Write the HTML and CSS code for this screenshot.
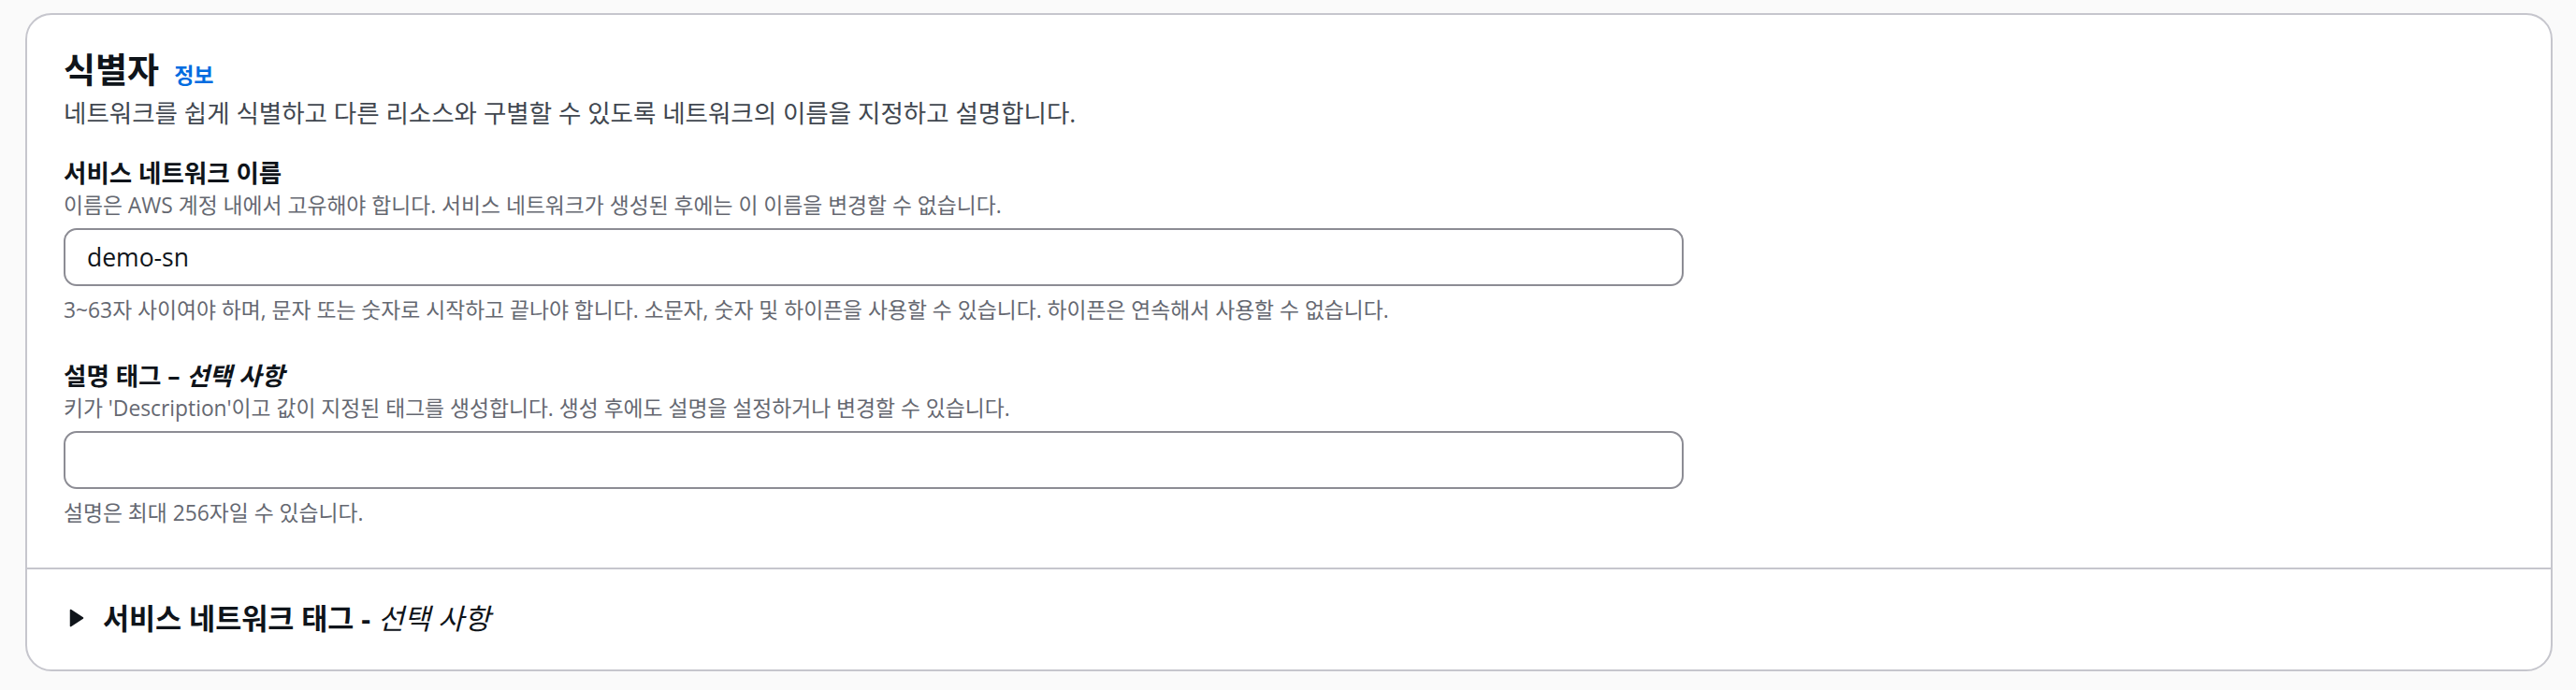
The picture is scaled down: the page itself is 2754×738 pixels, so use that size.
FILE: index.html
```html
<!DOCTYPE html>
<html lang="ko">
<head>
<meta charset="utf-8">
<title>식별자</title>
<link rel="stylesheet" href="styles.css">
</head>
<body>
<div class="container">
  <div class="header">
    <div class="title-row">
      <h2 class="title">식별자</h2>
      <a class="info" href="#">정보</a>
    </div>
    <p class="header-desc">네트워크를 쉽게 식별하고 다른 리소스와 구별할 수 있도록 네트워크의 이름을 지정하고 설명합니다.</p>
  </div>
  <div class="body">
    <div class="field">
      <div class="label">서비스 네트워크 이름</div>
      <div class="desc">이름은 AWS 계정 내에서 고유해야 합니다. 서비스 네트워크가 생성된 후에는 이 이름을 변경할 수 없습니다.</div>
      <input class="input" type="text" value="demo-sn">
      <div class="constraint">3~63자 사이여야 하며, 문자 또는 숫자로 시작하고 끝나야 합니다. 소문자, 숫자 및 하이픈을 사용할 수 있습니다. 하이픈은 연속해서 사용할 수 없습니다.</div>
    </div>
    <div class="field">
      <div class="label">설명 태그 – <i>선택 사항</i></div>
      <div class="desc">키가 'Description'이고 값이 지정된 태그를 생성합니다. 생성 후에도 설명을 설정하거나 변경할 수 있습니다.</div>
      <input class="input" type="text" value="">
      <div class="constraint">설명은 최대 256자일 수 있습니다.</div>
    </div>
  </div>
  <div class="expand">
    <span class="caret"><svg width="16" height="20" viewBox="0 0 16 20"><polygon points="1.5,1.5 14.5,10 1.5,18.5" fill="#0f141a" stroke="#0f141a" stroke-width="1.5" stroke-linejoin="round"/></svg></span>
    <span class="expand-title">서비스 네트워크 태그 - <i>선택 사항</i></span>
  </div>
</div>
</body>
</html>
```

FILE: styles.css
```css
html, body {
  margin: 0;
  padding: 0;
}
body {
  background: #fafafa;
  font-family: "Open Sans", "Noto Sans CJK KR", sans-serif;
  color: #0f141a;
  padding: 14px 25px 0 27px;
  height: 738px;
  box-sizing: border-box;
}
.container {
  background: #ffffff;
  border: 2px solid #c6c6cd;
  border-radius: 28px;
  overflow: hidden;
}
.header {
  padding: 38px 40px 0 39px;
}
.title-row {
  display: flex;
  align-items: baseline;
  gap: 16px;
}
.title {
  margin: 0;
  font-size: 37px;
  line-height: 42px;
  font-weight: 700;
  color: #0f141a;
}
.info {
  font-size: 23px;
  font-weight: 700;
  color: #006ce0;
  text-decoration: none;
}
.header-desc {
  margin: 6px 0 0 0;
  font-size: 26.5px;
  line-height: 38px;
  color: #414750;
}
.body {
  padding: 26px 40px 44px 39px;
  display: flex;
  flex-direction: column;
  gap: 37px;
}
.field {
  display: flex;
  flex-direction: column;
}
.label {
  font-size: 26.5px;
  line-height: 38px;
  font-weight: 700;
  color: #0f141a;
}
.label i {
  font-style: italic;
}
.desc {
  margin-top: 2px;
  font-size: 22.8px;
  line-height: 28px;
  color: #656871;
}
.input {
  margin-top: 10px;
  width: 1732px;
  height: 62px;
  box-sizing: border-box;
  border: 2px solid #8c8c94;
  border-radius: 14px;
  padding: 0 23px;
  font-family: "Open Sans", "Noto Sans CJK KR", sans-serif;
  font-size: 26.5px;
  color: #0f141a;
  background: #ffffff;
  outline: none;
}
.constraint {
  margin-top: 12px;
  font-size: 22.8px;
  line-height: 28px;
  color: #656871;
}
.expand {
  border-top: 2px solid #c6c6cd;
  padding: 33px 40px 36px 39px;
  display: flex;
  align-items: center;
}
.caret {
  width: 28px;
  height: 38px;
  display: flex;
  align-items: center;
  justify-content: center;
  margin-right: 14px;
}
.caret svg {
  display: block;
}
.expand-title {
  font-size: 30.5px;
  line-height: 38px;
  font-weight: 700;
  color: #0f141a;
}
.expand-title i {
  font-weight: 400;
  font-style: italic;
}
```
